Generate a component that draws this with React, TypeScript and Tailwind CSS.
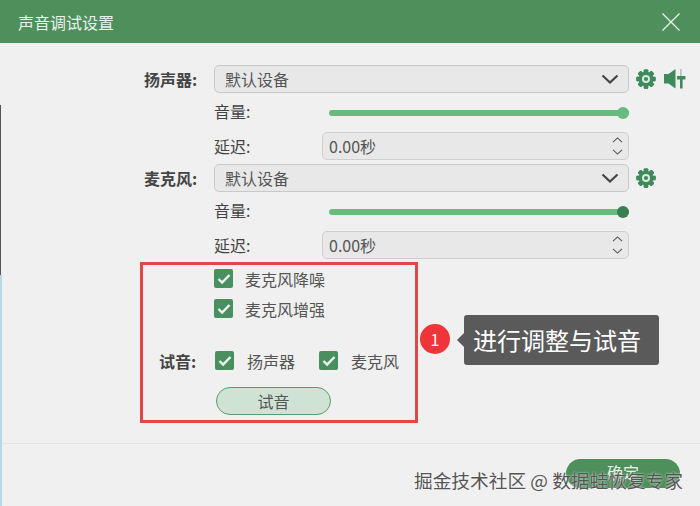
import React from "react";

const font = { fontFamily: '"Noto Sans CJK SC", "Noto Sans", sans-serif' };

function Gear({ className = "" }: { className?: string }) {
  const teeth = [0, 45, 90, 135, 180, 225, 270, 315];
  return (
    <svg viewBox="0 0 24 24" width="22" height="22" className={className}>
      {teeth.map((a) => (
        <rect key={a} x="9.6" y="1.5" width="4.8" height="21" rx="1" fill="#3f8a5a" transform={`rotate(${a} 12 12)`} />
      ))}
      <circle cx="12" cy="12" r="8" fill="#3f8a5a" />
      <circle cx="12" cy="12" r="4.4" fill="#dcebe0" />
      <circle cx="12" cy="12" r="2.3" fill="#3f8a5a" />
    </svg>
  );
}

function SpeakerTune() {
  return (
    <svg viewBox="0 0 22 20" width="22" height="20">
      <path d="M0 5h4.5L11.5 0v19.5l-7-5H0z" fill="#3f8a5a" />
      <rect x="16.2" y="0" width="1.4" height="8" fill="#9dbfa8" />
      <rect x="16" y="9" width="2.6" height="10.5" fill="#3f8a5a" />
      <rect x="13" y="7" width="8.5" height="3.4" rx="0.5" fill="#3f8a5a" />
    </svg>
  );
}

function Chevron({ up, w = 18, h = 10, sw = 2.2, color = "#444" }: { up?: boolean; w?: number; h?: number; sw?: number; color?: string }) {
  return (
    <svg viewBox="0 0 18 10" width={w} height={h} fill="none">
      <path d={up ? "M1.5 8.5L9 1.5l7.5 7" : "M1.5 1.5L9 8.5l7.5-7"} stroke={color} strokeWidth={sw} />
    </svg>
  );
}

function Select() {
  return (
    <div className="w-[415px] h-[28px] rounded-[5px] border border-[#c9c9c9] bg-[#e8e8e8] flex items-center justify-between pl-[10px] pr-[9px]">
      <span className="text-[16px] leading-none text-[#555]">默认设备</span>
      <Chevron />
    </div>
  );
}

function Slider({ knob }: { knob: string }) {
  return (
    <div className="relative w-[300px] h-[6px] rounded-full bg-[#68bb7f]">
      <span className={`absolute right-0 top-[-3px] w-[12px] h-[12px] rounded-full ${knob}`} />
    </div>
  );
}

function Spin() {
  return (
    <div className="w-[307px] h-[28px] rounded-[5px] border border-[#cfcfcf] bg-[#e8e8e8] flex items-center justify-between pl-[6px] pr-[5px]">
      <span className="text-[16px] leading-none text-[#555]">0.00秒</span>
      <div className="flex flex-col gap-[6px]">
        <Chevron up w={11} h={6} sw={1.8} color="#555" />
        <Chevron w={11} h={6} sw={1.8} color="#555" />
      </div>
    </div>
  );
}

function DeviceGroup({ label, knob, extra }: { label: string; knob: string; extra?: boolean }) {
  return (
    <div className="flex flex-col">
      <div className="flex items-center h-[28px]">
        <div className="w-[70px] text-[16px] font-bold text-[#444] whitespace-nowrap">{label}:</div>
        <Select />
        <Gear className="ml-[6px]" />
        {extra && <span className="ml-[7px] flex"><SpeakerTune /></span>}
      </div>
      <div className="flex items-center h-[39px] pl-[70px]">
        <div className="w-[115px] pb-[4px] text-[16px] text-[#444]">音量:</div>
        <Slider knob={knob} />
      </div>
      <div className="flex items-center h-[28px] pl-[70px]">
        <div className="w-[108px] text-[16px] text-[#444]">延迟:</div>
        <Spin />
      </div>
    </div>
  );
}

function Check({ label, className = "", gap = "ml-[12px]" }: { label: string; className?: string; gap?: string }) {
  return (
    <div className={`flex items-center ${className}`}>
      <span className="w-[19px] h-[19px] rounded-[2px] bg-[#4a8f5f] flex items-center justify-center">
        <svg viewBox="0 0 14 12" width="14" height="12" fill="none">
          <path d="M1.5 6l3.6 3.6L12.5 2" stroke="#eef6f0" strokeWidth="2.4" />
        </svg>
      </span>
      <span className={`${gap} text-[16px] leading-none text-[#555] whitespace-nowrap`}>{label}</span>
    </div>
  );
}

export default function App() {
  return (
    <div className="relative w-[700px] h-[506px] overflow-hidden bg-[#f0f0f0] flex flex-col" style={font}>
      <header className="h-[43px] shrink-0 bg-[#4e8f5c] flex items-center justify-between pl-[18px] pr-[20px]">
        <h1 className="text-[16px] font-normal text-[#e9f2eb]">声音调试设置</h1>
        <svg viewBox="0 0 18 18" width="18" height="18" fill="none">
          <path d="M0.5 0.5l17 17M17.5 0.5l-17 17" stroke="#eef6f0" strokeWidth="1.2" />
        </svg>
      </header>

      <main className="flex-1 flex flex-col pt-[22px] pl-[144px] gap-[4px]">
        <DeviceGroup label="扬声器" knob="bg-[#68bb7f]" extra />
        <DeviceGroup label="麦克风" knob="bg-[#3a7f52]" />

        <section className="ml-[-4px] mt-[-1px] w-[278px] h-[161px] border-[3px] border-[#e04848] flex flex-col pl-[16px]">
          <Check label="麦克风降噪" className="ml-[55px] mt-[4px] h-[19px]" />
          <Check label="麦克风增强" className="ml-[55px] mt-[11px] h-[19px]" />
          <div className="flex items-center mt-[33px] h-[19px]">
            <span className="w-[56px] text-[16px] font-bold text-[#444] whitespace-nowrap">试音:</span>
            <Check label="扬声器" gap="ml-[13px]" />
            <Check label="麦克风" gap="ml-[13px]" className="ml-[24px]" />
          </div>
          <button className="ml-[57px] mt-[17px] w-[115px] h-[28px] rounded-full border border-[#5c9a70] bg-[#cfe3d5] text-[16px] leading-none text-[#555]">
            试音
          </button>
        </section>
      </main>

      <footer className="h-[63px] shrink-0 border-t border-[#e2e2e2] flex justify-end pt-[15px] pr-[20px]">
        <button className="w-[114px] h-[29px] rounded-full bg-[#4e8f5c] pb-[3px] text-[16px] leading-none text-[#e9f2eb]">确定</button>
      </footer>

      <div className="absolute left-0 top-[105px] w-[1px] h-[170px] bg-[#555]" />
      <div className="absolute left-0 top-[275px] w-[2px] h-[231px] bg-[#b9d8e6]" />

      <div className="absolute left-[420px] top-[324px] w-[30px] h-[30px] rounded-full bg-[#f0353a] flex items-center justify-center text-[16px] text-white">
        1
      </div>
      <div className="absolute left-[464px] top-[315px] w-[195px] h-[50px] rounded-[3px] bg-[#5a5a5a] flex items-center pl-[9px] text-[24px] leading-none text-white whitespace-nowrap">
        <span className="absolute left-[-7px] top-[18px] w-0 h-0 border-y-[7px] border-y-transparent border-r-[7px] border-r-[#5a5a5a]" />
        进行调整与试音
      </div>
      <div className="absolute left-[414px] top-[467px] text-[18.7px] leading-[26px] text-[#555] whitespace-nowrap [text-shadow:0_0_2px_#fff]">
        掘金技术社区 @ 数据蛙恢复专家
      </div>
    </div>
  );
}
